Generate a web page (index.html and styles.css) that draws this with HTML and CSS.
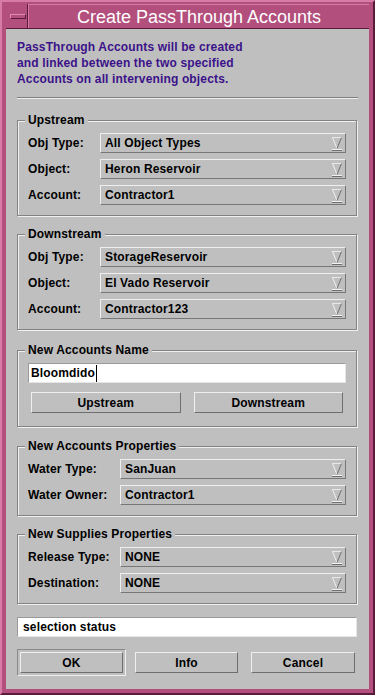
FILE: index.html
```html
<html>
  <head>
    <link rel="stylesheet" href="styles.css">
  </head>
  <body>
    <div class="window">
      <div class="titlebar">
        <div class="menu-btn"><span class="menu-bar"></span></div>
        <div class="title">Create PassThrough Accounts</div>
      </div>

      <div class="content">
        <p class="intro">
          PassThrough Accounts will be created<br>
          and linked between the two specified<br>
          Accounts on all intervening objects.
        </p>
        <div class="separator"></div>

        <div class="group">
          <span class="group-title">Upstream</span>
          <div class="row">
            <span class="label">Obj Type:</span>
            <div class="combo"><span>All Object Types</span><svg class="arrow" width="12" height="16" viewBox="0 0 12 16"><path d="M1.5 1.5L6 12.5" stroke="#f2f2f2"/><path d="M1 1.5H11" stroke="#e8e8e8"/><path d="M10.5 1.5L6 12.5" stroke="#6e6e6e"/><path d="M1 13.5H11" stroke="#f2f2f2"/><path d="M1 14.5H11" stroke="#6e6e6e"/></svg></div>
          </div>
          <div class="row">
            <span class="label">Object:</span>
            <div class="combo"><span>Heron Reservoir</span><svg class="arrow" width="12" height="16" viewBox="0 0 12 16"><path d="M1.5 1.5L6 12.5" stroke="#f2f2f2"/><path d="M1 1.5H11" stroke="#e8e8e8"/><path d="M10.5 1.5L6 12.5" stroke="#6e6e6e"/><path d="M1 13.5H11" stroke="#f2f2f2"/><path d="M1 14.5H11" stroke="#6e6e6e"/></svg></div>
          </div>
          <div class="row">
            <span class="label">Account:</span>
            <div class="combo"><span>Contractor1</span><svg class="arrow" width="12" height="16" viewBox="0 0 12 16"><path d="M1.5 1.5L6 12.5" stroke="#f2f2f2"/><path d="M1 1.5H11" stroke="#e8e8e8"/><path d="M10.5 1.5L6 12.5" stroke="#6e6e6e"/><path d="M1 13.5H11" stroke="#f2f2f2"/><path d="M1 14.5H11" stroke="#6e6e6e"/></svg></div>
          </div>
        </div>

        <div class="group">
          <span class="group-title">Downstream</span>
          <div class="row">
            <span class="label">Obj Type:</span>
            <div class="combo"><span>StorageReservoir</span><svg class="arrow" width="12" height="16" viewBox="0 0 12 16"><path d="M1.5 1.5L6 12.5" stroke="#f2f2f2"/><path d="M1 1.5H11" stroke="#e8e8e8"/><path d="M10.5 1.5L6 12.5" stroke="#6e6e6e"/><path d="M1 13.5H11" stroke="#f2f2f2"/><path d="M1 14.5H11" stroke="#6e6e6e"/></svg></div>
          </div>
          <div class="row">
            <span class="label">Object:</span>
            <div class="combo"><span>El Vado Reservoir</span><svg class="arrow" width="12" height="16" viewBox="0 0 12 16"><path d="M1.5 1.5L6 12.5" stroke="#f2f2f2"/><path d="M1 1.5H11" stroke="#e8e8e8"/><path d="M10.5 1.5L6 12.5" stroke="#6e6e6e"/><path d="M1 13.5H11" stroke="#f2f2f2"/><path d="M1 14.5H11" stroke="#6e6e6e"/></svg></div>
          </div>
          <div class="row">
            <span class="label">Account:</span>
            <div class="combo"><span>Contractor123</span><svg class="arrow" width="12" height="16" viewBox="0 0 12 16"><path d="M1.5 1.5L6 12.5" stroke="#f2f2f2"/><path d="M1 1.5H11" stroke="#e8e8e8"/><path d="M10.5 1.5L6 12.5" stroke="#6e6e6e"/><path d="M1 13.5H11" stroke="#f2f2f2"/><path d="M1 14.5H11" stroke="#6e6e6e"/></svg></div>
          </div>
        </div>

        <div class="group name-group">
          <span class="group-title">New Accounts Name</span>
          <div class="field">Bloomdido<span class="caret"></span></div>
          <div class="name-buttons">
            <button class="btn">Upstream</button>
            <button class="btn">Downstream</button>
          </div>
        </div>

        <div class="group wide props">
          <span class="group-title">New Accounts Properties</span>
          <div class="row">
            <span class="label">Water Type:</span>
            <div class="combo"><span>SanJuan</span><svg class="arrow" width="12" height="16" viewBox="0 0 12 16"><path d="M1.5 1.5L6 12.5" stroke="#f2f2f2"/><path d="M1 1.5H11" stroke="#e8e8e8"/><path d="M10.5 1.5L6 12.5" stroke="#6e6e6e"/><path d="M1 13.5H11" stroke="#f2f2f2"/><path d="M1 14.5H11" stroke="#6e6e6e"/></svg></div>
          </div>
          <div class="row">
            <span class="label">Water Owner:</span>
            <div class="combo"><span>Contractor1</span><svg class="arrow" width="12" height="16" viewBox="0 0 12 16"><path d="M1.5 1.5L6 12.5" stroke="#f2f2f2"/><path d="M1 1.5H11" stroke="#e8e8e8"/><path d="M10.5 1.5L6 12.5" stroke="#6e6e6e"/><path d="M1 13.5H11" stroke="#f2f2f2"/><path d="M1 14.5H11" stroke="#6e6e6e"/></svg></div>
          </div>
        </div>

        <div class="group wide">
          <span class="group-title">New Supplies Properties</span>
          <div class="row">
            <span class="label">Release Type:</span>
            <div class="combo"><span>NONE</span><svg class="arrow" width="12" height="16" viewBox="0 0 12 16"><path d="M1.5 1.5L6 12.5" stroke="#f2f2f2"/><path d="M1 1.5H11" stroke="#e8e8e8"/><path d="M10.5 1.5L6 12.5" stroke="#6e6e6e"/><path d="M1 13.5H11" stroke="#f2f2f2"/><path d="M1 14.5H11" stroke="#6e6e6e"/></svg></div>
          </div>
          <div class="row">
            <span class="label">Destination:</span>
            <div class="combo"><span>NONE</span><svg class="arrow" width="12" height="16" viewBox="0 0 12 16"><path d="M1.5 1.5L6 12.5" stroke="#f2f2f2"/><path d="M1 1.5H11" stroke="#e8e8e8"/><path d="M10.5 1.5L6 12.5" stroke="#6e6e6e"/><path d="M1 13.5H11" stroke="#f2f2f2"/><path d="M1 14.5H11" stroke="#6e6e6e"/></svg></div>
          </div>
        </div>

        <div class="field status">selection status</div>

        <div class="actions">
          <div class="default-ring"><button class="btn">OK</button></div>
          <button class="btn info">Info</button>
          <button class="btn cancel">Cancel</button>
        </div>
      </div>
    </div>
  </body>
</html>
```

FILE: styles.css
```css
html,
body {
  margin: 0;
  width: 375px;
  height: 695px;
  overflow: hidden;
}
* {
  box-sizing: border-box;
}
body,
button,
p,
div,
span {
  font-family: 'Liberation Sans', Arial, sans-serif;
  font-size: 12px;
  font-weight: bold;
  letter-spacing: 0.15px;
  color: #000;
}

.window {
  width: 375px;
  height: 695px;
  background-color: #b24f7c;
  border: 2px solid;
  border-color: #d77aa6 #5b1c3b #5b1c3b #d77aa6;
  padding: 2px 4px 4px 4px;
  display: flex;
  flex-direction: column;
}

.titlebar {
  height: 25px;
  display: flex;
  border-bottom: 1px solid #5b1c3b;
}
.menu-btn {
  width: 22px;
  border-right: 1px solid #5b1c3b;
  display: flex;
  align-items: center;
  padding-left: 4px;
}
.menu-bar {
  width: 16px;
  height: 5px;
  border: 1px solid;
  border-color: #e08ab2 #5b1c3b #5b1c3b #e08ab2;
}
.title {
  flex: 1;
  text-align: center;
  color: #fff;
  font-size: 18px;
  font-weight: normal;
  letter-spacing: 0;
  line-height: 24px;
  border-top: 1px solid #d77aa6;
  border-left: 1px solid #d77aa6;
}

.content {
  height: 660px;
  background-color: #bfbfbf;
  padding: 10px 0 11px 0;
}

.intro {
  margin: 0 0 0 11px;
  line-height: 16px;
  color: #3b1289;
}
.separator {
  margin: 10px 11px 0 11px;
  height: 2px;
  border-top: 1px solid #808080;
  border-bottom: 1px solid #ededed;
}

.group {
  position: relative;
  margin: 21px 12px 0 11px;
  border: 1px solid #838383;
  box-shadow: 1px 1px 0 #f0f0f0, inset 1px 1px 0 #f0f0f0;
  padding: 12px 10px 10px 10px;
  display: flex;
  flex-direction: column;
  gap: 6px;
}
.group + .group {
  margin-top: 18px;
}
.group.name-group {
  margin-top: 20px;
}
.group.props {
  margin-top: 19px;
}
.group-title {
  position: absolute;
  top: -8px;
  left: 7px;
  padding: 0 3px;
  line-height: 15px;
  background-color: #bfbfbf;
}

.row {
  height: 20px;
  display: flex;
  align-items: center;
}
.label {
  width: 72px;
  flex: none;
}
.wide .label {
  width: 92px;
}
.combo {
  flex: 1;
  height: 20px;
  border: 1px solid;
  border-color: #efefef #777 #777 #efefef;
  display: flex;
  align-items: center;
  justify-content: space-between;
  padding: 0 2px 0 4px;
}
.arrow {
  margin-top: 1px;
}

.name-group {
  padding-top: 12px;
  padding-bottom: 13px;
  gap: 9px;
}
.field {
  height: 20px;
  background-color: #fff;
  border: 1px solid;
  border-color: #9a9a9a #e6e6e6 #e6e6e6 #9a9a9a;
  padding-left: 2px;
  line-height: 18px;
  display: flex;
  align-items: center;
}
.caret {
  width: 1px;
  height: 17px;
  margin-left: 1px;
  background-color: #000;
}
.name-buttons {
  display: flex;
  gap: 13px;
  padding: 0 3px;
}

.btn {
  flex: 1;
  height: 21px;
  margin: 0;
  padding: 0;
  background-color: #bfbfbf;
  border: 1px solid;
  border-color: #efefef #6e6e6e #6e6e6e #efefef;
  border-radius: 0;
  text-align: center;
}

.status {
  margin: 13px 12px 0 11px;
  padding-left: 5px;
}

.actions {
  margin: 12px 14px 0 11px;
  height: 27px;
  display: flex;
  align-items: center;
}
.default-ring {
  width: 110px;
  height: 27px;
  padding: 2px;
  border: 1px solid;
  border-color: #8a8a8a #efefef #efefef #8a8a8a;
  display: flex;
}
.info {
  flex: none;
  width: 103px;
  margin-left: 9px;
}
.cancel {
  flex: none;
  width: 104px;
  margin-left: 13px;
}
```
